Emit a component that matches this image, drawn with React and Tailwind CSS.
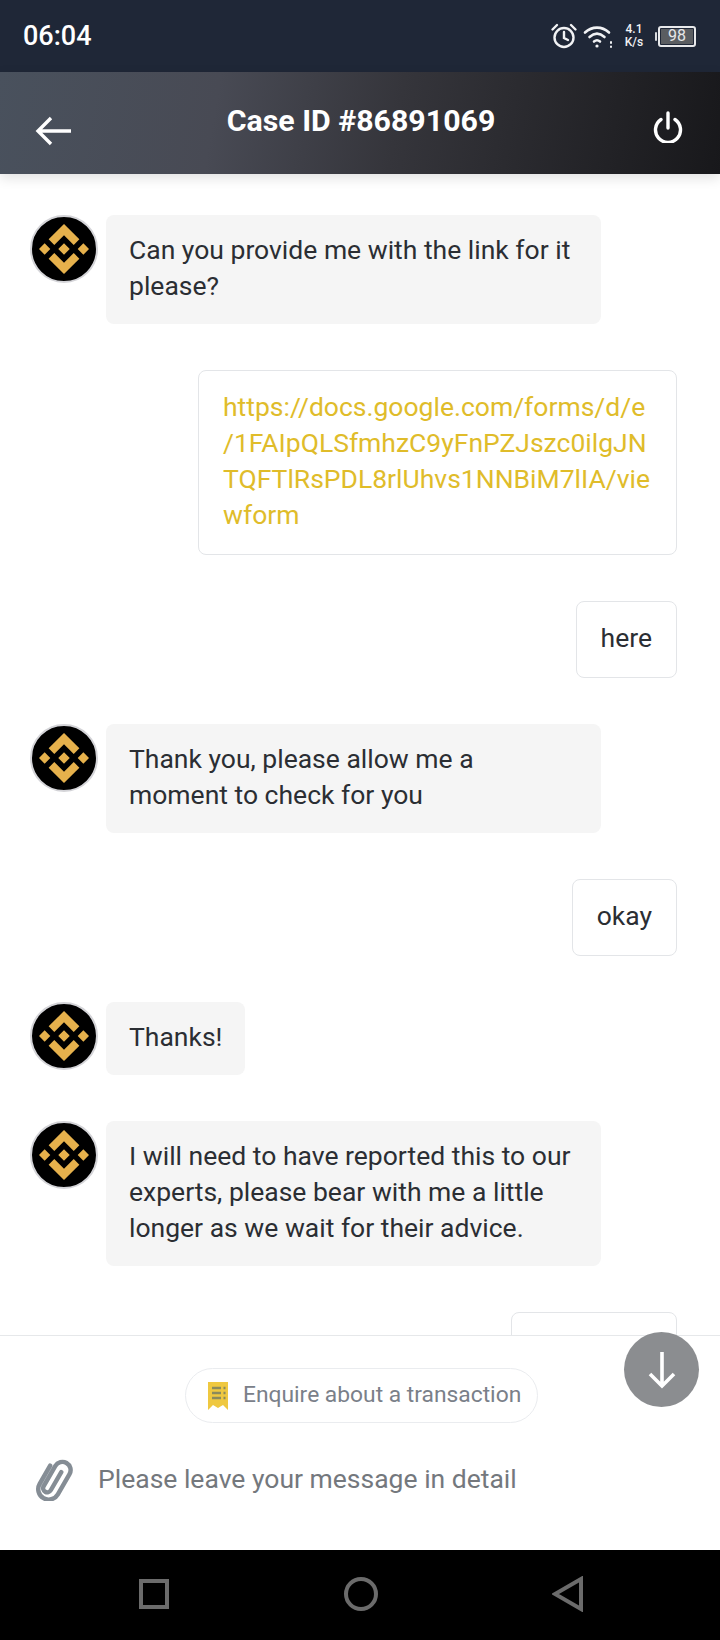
import React from "react";

function BinanceAvatar() {
    return (
        <div className="flex h-[68px] w-[68px] shrink-0 items-center justify-center rounded-full border-2 border-[#d4d4d8] bg-black">
            <svg viewBox="0 0 126.61 126.61" className="h-[50px] w-[50px]" fill="#e6b14c">
                <path d="M38.73 53.2l24.59-24.58 24.6 24.6 14.3-14.31L63.32 0 24.43 38.9l14.3 14.3zM0 63.31l14.3-14.31 14.31 14.31-14.31 14.3zM38.73 73.41l24.59 24.59 24.6-24.6 14.31 14.29-38.9 38.91-38.91-38.88-.02-.02zM98 63.31l14.3-14.31 14.31 14.3-14.31 14.32zM77.83 63.3L63.32 48.78 52.59 59.51l-1.24 1.23-2.54 2.54 14.51 14.5 14.51-14.47z" />
            </svg>
        </div>
    );
}

function AgentMessage({ lines, wide = true }) {
    return (
        <div className="flex items-start gap-2">
            <BinanceAvatar />
            <div className={`rounded-lg bg-[#f5f5f5] px-[23px] pb-[20px] pt-[17px] text-[26.5px] leading-[36px] text-[#2b2e33] ${wide ? "w-[495px]" : ""}`}>
                {lines.map((line) => (
                    <div key={line} className="whitespace-nowrap">{line}</div>
                ))}
            </div>
        </div>
    );
}

function UserMessage({ lines, className = "" }) {
    return (
        <div className="flex justify-end">
            <div className={`rounded-lg border border-[#e3e5e8] bg-white px-6 pb-[21px] pt-[18px] text-[26.5px] leading-[36px] ${className}`}>
                {lines.map((line) => (
                    <div key={line} className="whitespace-nowrap">{line}</div>
                ))}
            </div>
        </div>
    );
}

function StatusBar() {
    return (
        <div className="flex h-[72px] shrink-0 items-center justify-between bg-[#1f2737] pl-[23px] pr-6 text-white">
            <span className="text-[27px] font-medium">06:04</span>
            <div className="flex items-center">
                {/* alarm */}
                <svg viewBox="0 0 28 28" className="h-[28px] w-[28px]" fill="none" stroke="#f1f2f4" strokeWidth="2.4" strokeLinecap="round">
                    <circle cx="14" cy="15.5" r="9.5" />
                    <path d="M14 10v6l4 2M2.5 7.5 7 3M25.5 7.5 21 3" />
                </svg>
                {/* wifi */}
                <svg viewBox="0 0 32 26" className="ml-[5px] h-[26px] w-[32px]" fill="none" stroke="#f1f2f4" strokeWidth="2.6" strokeLinecap="round">
                    <path d="M2 9.5C9 3 19 3 26 9.5M6.5 14c5-4.4 10-4.4 15 0M11 18.5c2.2-1.8 3.8-1.8 6 0" />
                    <circle cx="14" cy="23" r="1.6" fill="#f1f2f4" stroke="none" />
                    <path d="M28 19v1M28 23.5v.5" strokeWidth="2" />
                </svg>
                <div className="ml-[7px] flex w-[24px] flex-col items-center text-[12px] font-medium leading-[13px] text-[#f1f2f4]">
                    <span>4.1</span>
                    <span>K/s</span>
                </div>
                <div className="ml-[9px] h-[9px] w-[2px] rounded-sm bg-[#d9dbde]" />
                <div className="ml-[1px] flex h-[21px] w-[38px] items-center rounded-[3px] border-2 border-[#e8e9eb] p-[1px]">
                    <div className="flex h-full w-full items-center justify-center bg-[#5a5d61] text-[16px] leading-none text-[#e6e7e9]">98</div>
                </div>
            </div>
        </div>
    );
}

function Header() {
    return (
        <div className="relative z-10 flex h-[102px] shrink-0 items-center justify-between bg-[linear-gradient(100deg,#49515d_0%,#484a54_30%,#35353b_55%,#18181b_100%)] pl-[35px] pr-[37px] shadow-[0_4px_12px_rgba(0,0,0,0.12)]">
            <svg viewBox="0 0 36 30" className="mt-[15px] h-[30px] w-[36px]" fill="none" stroke="#fff" strokeWidth="3.4">
                <path d="M36 15H3M16 2 3 15l13 13" />
            </svg>
            <span className="mb-[5px] mr-[2px] text-[30.3px] font-bold text-white">Case ID #86891069</span>
            <svg viewBox="0 0 30 32" className="mt-[7px] h-[32px] w-[30px]" fill="none" stroke="#fff" strokeWidth="3.4" strokeLinecap="round">
                <path d="M15 2v15M8 8.5a12.5 12.5 0 1 0 14 0" />
            </svg>
        </div>
    );
}

function ReceiptIcon() {
    return (
        <svg viewBox="0 0 22 30" className="h-[30px] w-[22px] shrink-0">
            <path d="M1 1h20v28l-5-5-5 3-5-3-5 5z" fill="#efc840" />
            <path d="M5 7h9M5 12h9M5 17h9" stroke="#8b8a5c" strokeWidth="2.6" />
            <path d="M16.5 7h2M16.5 12h2M16.5 17h2" stroke="#8b8a5c" strokeWidth="2.6" />
        </svg>
    );
}

function PaperclipIcon() {
    return (
        <svg viewBox="3 3 32 36" className="mt-[3px] h-[42px] w-[38px] shrink-0" fill="none" stroke="#858d95" strokeWidth="3.8" strokeLinecap="round">
            <g transform="rotate(30 19 21)">
                <path d="M10 12v18a9 9 0 0 0 18 0V10a7 7 0 0 0-14 0v20a3.5 3.5 0 0 0 7 0V12" />
            </g>
        </svg>
    );
}

export default function App() {
    return (
        <div className="relative flex h-[1640px] w-[720px] flex-col overflow-hidden bg-white font-['Roboto',sans-serif]">
            <StatusBar />
            <Header />

            <div className="flex h-[1161px] shrink-0 flex-col gap-[46px] overflow-hidden pl-[30px] pr-[43px] pt-[41px]">
                <AgentMessage lines={["Can you provide me with the link for it", "please?"]} />
                <UserMessage
                    className="w-[479px] text-[#e0bc2a]"
                    lines={["https://docs.google.com/forms/d/e", "/1FAIpQLSfmhzC9yFnPZJszc0ilgJN", "TQFTlRsPDL8rlUhvs1NNBiM7lIA/vie", "wform"]}
                />
                <UserMessage className="text-[#2b2e33]" lines={["here"]} />
                <AgentMessage lines={["Thank you, please allow me a", "moment to check for you"]} />
                <UserMessage className="text-[#2b2e33]" lines={["okay"]} />
                <AgentMessage wide={false} lines={["Thanks!"]} />
                <AgentMessage lines={["I will need to have reported this to our", "experts, please bear with me a little", "longer as we wait for their advice."]} />
                <UserMessage className="w-[166px] shrink-0 text-[#2b2e33]" lines={["\u00a0"]} />
            </div>

            <div className="flex flex-1 flex-col border-t border-[#e6e8ea] bg-white">
                <div className="mt-[32px] flex justify-center pl-[3px]">
                    <div className="flex h-[55px] w-[353px] items-center gap-[14px] rounded-full border border-[#eaecef] pl-[21px]">
                        <ReceiptIcon />
                        <span className="whitespace-nowrap text-[22.8px] text-[#7a8089]">Enquire about a transaction</span>
                    </div>
                </div>
                <div className="mt-[33px] flex items-center pl-[35px]">
                    <PaperclipIcon />
                    <span className="ml-[25px] text-[26.5px] text-[#74787d]">Please leave your message in detail</span>
                </div>
            </div>

            <div className="flex h-[90px] shrink-0 items-center bg-black pb-[3px]">
                <div className="ml-[139px] h-[30px] w-[30px] border-[4px] border-[#6b6b6b]" />
                <div className="ml-[175px] h-[34px] w-[34px] rounded-full border-[4px] border-[#6b6b6b]" />
                <svg viewBox="0 0 32 36" className="ml-[174px] h-[36px] w-[32px]" fill="none" stroke="#6b6b6b" strokeWidth="4">
                    <path d="M29 3v30L3 18z" />
                </svg>
            </div>

            {/* scroll down button sits over the footer line */}
            <div className="absolute left-[624px] top-[1332px] flex h-[75px] w-[75px] items-center justify-center rounded-full bg-[#8b8d90]">
                <svg viewBox="0 0 28 38" className="h-[38px] w-[28px]" fill="none" stroke="#fff" strokeWidth="3.6">
                    <path d="M14 1v34M2 23l12 12 12-12" />
                </svg>
            </div>
        </div>
    );
}
